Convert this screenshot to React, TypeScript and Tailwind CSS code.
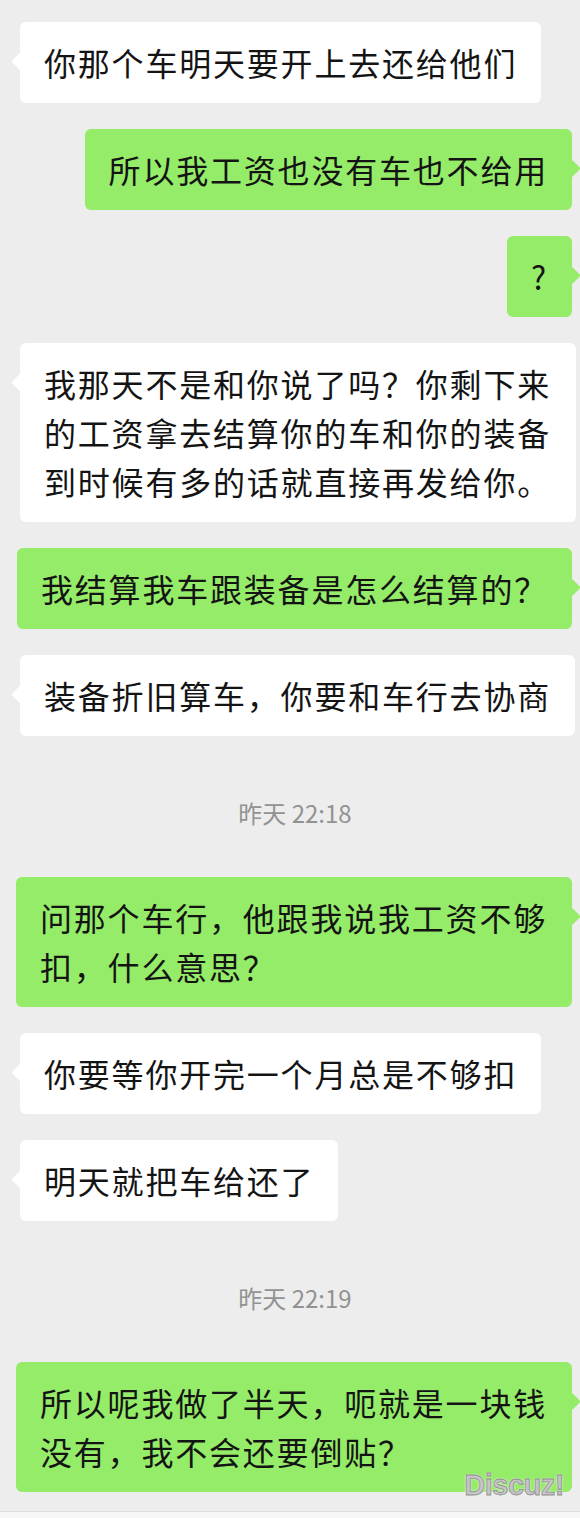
type Msg =
  | { kind: "in" | "out"; text: string }
  | { kind: "time"; text: string };

const messages: Msg[] = [
  { kind: "in", text: "你那个车明天要开上去还给他们" },
  { kind: "out", text: "所以我工资也没有车也不给用" },
  { kind: "out", text: "?" },
  { kind: "in", text: "我那天不是和你说了吗？你剩下来的工资拿去结算你的车和你的装备到时候有多的话就直接再发给你。" },
  { kind: "out", text: "我结算我车跟装备是怎么结算的？" },
  { kind: "in", text: "装备折旧算车，你要和车行去协商" },
  { kind: "time", text: "昨天 22:18" },
  { kind: "out", text: "问那个车行，他跟我说我工资不够扣，什么意思？" },
  { kind: "in", text: "你要等你开完一个月总是不够扣" },
  { kind: "in", text: "明天就把车给还了" },
  { kind: "time", text: "昨天 22:19" },
  { kind: "out", text: "所以呢我做了半天，呃就是一块钱没有，我不会还要倒贴？" },
];

const Bubble = ({ text, mine }: { text: string; mine: boolean }) => (
  <div className={`flex ${mine ? "justify-end pr-[8px]" : "justify-start pl-[20px]"}`}>
    <div
      className={`relative max-w-[556px] rounded-[6px] py-[16px] pl-[24px] pr-[24px] text-[32px] leading-[49px] tracking-[1.8px] text-[#141414] ${
        mine ? "bg-[#95ec69]" : "bg-white"
      }`}
    >
      <span
        className={`absolute top-[33px] size-[13px] rotate-45 rounded-[2px] ${
          mine ? "-right-[6px] bg-[#95ec69]" : "-left-[6px] bg-white"
        }`}
      />
      <p className="relative break-all">{text}</p>
    </div>
  </div>
);

export default function App() {
  return (
    <div className="relative flex min-h-[1518px] flex-col bg-[#ededed] font-['Noto_Sans_CJK_SC','Noto_Sans',sans-serif]">
      <div className="flex flex-col gap-[26px] pt-[22px]">
        {messages.map((m, i) =>
          m.kind === "time" ? (
            <div key={i} className="pt-[36px] pb-[23px] pl-[10px] text-center text-[24px] leading-[30px] text-[#929292]">
              {m.text}
            </div>
          ) : (
            <Bubble key={i} text={m.text} mine={m.kind === "out"} />
          )
        )}
      </div>
      <div className="mt-auto h-[7px] border-t border-[#dcdcdc] bg-[#f7f7f7]" />
      <span className="absolute right-[16px] bottom-[18px] font-['Liberation_Sans',sans-serif] text-[29px] font-bold leading-none tracking-[-0.5px] text-[#c4c4c4] [-webkit-text-stroke:0.8px_#8e8e8e] [text-shadow:0_0_2px_#fff,0_0_2px_#fff]">
        Discuz!
      </span>
    </div>
  );
}
